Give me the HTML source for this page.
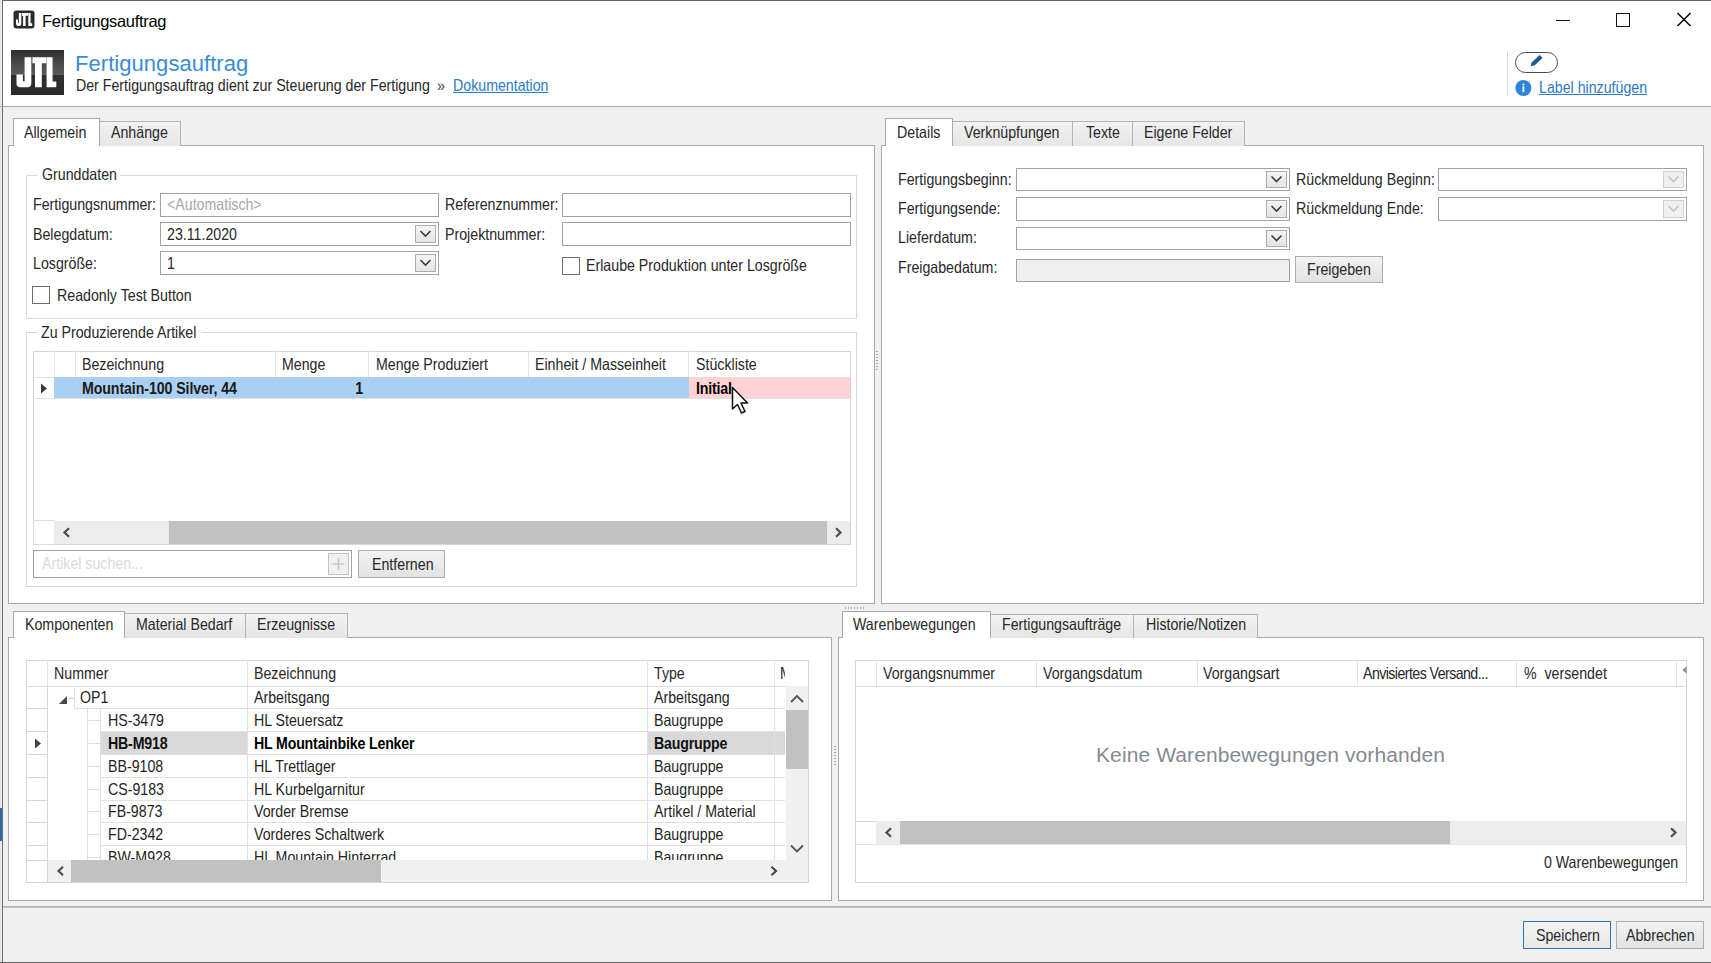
<!DOCTYPE html>
<html><head><meta charset="utf-8"><title>Fertigungsauftrag</title>
<style>
html,body{margin:0;padding:0}
body{width:1711px;height:963px;overflow:hidden;background:#f0f0f0;font-family:"Liberation Sans",sans-serif;font-size:15px;color:#1f1f1f;position:relative}
.a{position:absolute;box-sizing:border-box}
.t{position:absolute;white-space:nowrap;line-height:1}
</style></head><body>

<div class="a" style="left:0px;top:0px;width:1711px;height:107px;background:#ffffff"></div>
<div class="a" style="left:0px;top:0px;width:1711px;height:1px;background:#666666"></div>
<div class="a" style="left:1.5px;top:0px;width:1.2000000000000002px;height:963px;background:#6e6e6e"></div>
<div class="a" style="left:0px;top:0px;width:2px;height:963px;background:#e8e8e8"></div>
<div class="a" style="left:0px;top:808px;width:2px;height:33px;background:#2a6aa8"></div>
<div class="a" style="left:0px;top:962px;width:1711px;height:1px;background:#666666"></div>
<svg class="a" style="left:13px;top:10px" width="23" height="19" viewBox="0 0 23 19">
<rect x="0.5" y="0.5" width="21" height="18" rx="3" fill="#2a2a2a"/>
<path d="M5.8 3H8.3V13.5Q8.3 16 5.8 16H5.3Q3 16 3 13.5V9.5H5V13.2H5.8Z M8.9 3H15V5.8H12.6V16H10.1V5.8H8.9Z M15.3 3H17.6V13.3H19.2V16H15.3Z" fill="#fff"/>
</svg>
<div class="t" style="left:42px;top:13.03px;font-size:16.5px;color:#000;font-weight:normal;letter-spacing:-0.3px;">Fertigungsauftrag</div>
<div class="a" style="left:1556px;top:19.5px;width:14px;height:1.5px;background:#111"></div>
<div class="a" style="left:1616px;top:13px;width:14px;height:14px;border:1.6px solid #111"></div>
<svg class="a" style="left:1676px;top:12px" width="16" height="16" viewBox="0 0 16 16"><path d="M1.5 1L14.5 14M14.5 1L1.5 14" stroke="#111" stroke-width="1.6"/></svg>
<svg class="a" style="left:11px;top:50px" width="53" height="45" viewBox="0 0 53 45">
<defs><linearGradient id="lg" x1="0" y1="0" x2="0" y2="1">
<stop offset="0" stop-color="#2e2e2e"/><stop offset="0.3" stop-color="#4a4a4a"/><stop offset="0.55" stop-color="#5a5a5a"/><stop offset="0.56" stop-color="#303030"/><stop offset="1" stop-color="#2a2a2a"/></linearGradient></defs>
<rect width="53" height="45" fill="url(#lg)"/>
<path d="M13.6 7.2H20.3V33.5Q20.3 37.3 16.5 37.3H9.3Q5.5 37.3 5.5 33.5V24.4H11.9V31.2H13.6Z" fill="#fff"/>
<path d="M21.4 7.2H35.4V13.3H30.8V37.3H24V13.3H21.4Z" fill="#fff"/>
<path d="M35.6 7.2H41.6V31.5H45.3V37.3H35.6Z" fill="#fff"/>
</svg>
<div class="t" style="left:75px;top:52.68px;font-size:22px;color:#3a8cd4;font-weight:normal;letter-spacing:0.05px;">Fertigungsauftrag</div>
<div class="t" style="left:75.5px;top:76.81px;font-size:17px;color:#282828;font-weight:normal;letter-spacing:0px;transform:scaleX(0.834);transform-origin:left top;">Der Fertigungsauftrag dient zur Steuerung der Fertigung</div>
<div class="t" style="left:437px;top:77.23px;font-size:16.5px;color:#444;font-weight:normal;letter-spacing:0.0px;transform:scaleX(0.86);transform-origin:left top;">»</div>
<div class="t" style="left:452.5px;top:77.23px;font-size:16.5px;color:#2a7cc7;font-weight:normal;letter-spacing:0.0px;transform:scaleX(0.86);transform-origin:left top;text-decoration:underline">Dokumentation</div>
<div class="a" style="left:1507px;top:52px;width:1px;height:44px;background:#d8d8d8"></div>
<div class="a" style="left:1515px;top:51.5px;width:43px;height:21.0px;border:1.6px solid #4a4a4a;border-radius:11px;background:#fff"></div>
<svg class="a" style="left:1526px;top:52px" width="20" height="18" viewBox="0 0 20 18"><path d="M4.6 14.2L5.6 10.4L13.6 3L16.6 6L8.7 13.3Z" fill="#1d5a8e"/></svg>
<svg class="a" style="left:1515px;top:80px" width="17" height="17" viewBox="0 0 17 17"><circle cx="8.4" cy="8" r="8" fill="#2b86d6"/><rect x="7.5" y="3.6" width="1.8" height="1.8" fill="#fff"/><rect x="7.5" y="6.3" width="1.8" height="5.8" fill="#fff"/></svg>
<div class="t" style="left:1538.8px;top:78.63px;font-size:16.5px;color:#2f7abf;font-weight:normal;letter-spacing:0px;transform:scaleX(0.86);transform-origin:left top;text-decoration:underline">Label hinzufügen</div>
<div class="a" style="left:0px;top:106px;width:1711px;height:1px;background:#a8a8a8"></div>
<div class="a" style="left:8px;top:145px;width:867px;height:459px;background:#fff;border:1px solid #a9a9a9"></div>
<div class="a" style="left:99px;top:121px;width:82px;height:25px;background:linear-gradient(#f2f2f2,#e6e6e6);border:1px solid #b4b4b4;border-bottom:none"></div>
<div class="t" style="left:111px;top:124.03px;font-size:16.5px;color:#282828;font-weight:normal;letter-spacing:0px;transform:scaleX(0.86);transform-origin:left top;">Anhänge</div>
<div class="a" style="left:13px;top:118px;width:87px;height:28px;background:#fff;border:1px solid #a9a9a9;border-bottom:none"></div>
<div class="t" style="left:24px;top:124.03px;font-size:16.5px;color:#282828;font-weight:normal;letter-spacing:0px;transform:scaleX(0.86);transform-origin:left top;">Allgemein</div>
<div class="a" style="left:14px;top:145px;width:85px;height:2px;background:#fff"></div>
<div class="a" style="left:26px;top:175px;width:831px;height:144px;border:1px solid #d8d8d8"></div>
<div class="a" style="left:38px;top:173px;width:82px;height:5px;background:#fff"></div>
<div class="t" style="left:42px;top:166.43px;font-size:16.5px;color:#282828;font-weight:normal;letter-spacing:0px;transform:scaleX(0.86);transform-origin:left top;">Grunddaten</div>
<div class="t" style="left:33px;top:196.03px;font-size:16.5px;color:#282828;font-weight:normal;letter-spacing:0px;transform:scaleX(0.86);transform-origin:left top;">Fertigungsnummer:</div>
<div class="a" style="left:160px;top:193px;width:279px;height:24px;background:#fff;border:1px solid #a2a2a2"></div>
<div class="t" style="left:167px;top:196.03px;font-size:16.5px;color:#a8a8a8;font-weight:normal;letter-spacing:0px;transform:scaleX(0.86);transform-origin:left top;">&lt;Automatisch&gt;</div>
<div class="t" style="left:445px;top:196.23px;font-size:16.5px;color:#282828;font-weight:normal;letter-spacing:0px;transform:scaleX(0.86);transform-origin:left top;">Referenznummer:</div>
<div class="a" style="left:562px;top:193px;width:289px;height:24px;background:#fff;border:1px solid #a2a2a2"></div>
<div class="t" style="left:33px;top:225.63px;font-size:16.5px;color:#282828;font-weight:normal;letter-spacing:0px;transform:scaleX(0.86);transform-origin:left top;">Belegdatum:</div>
<div class="a" style="left:160px;top:222px;width:279px;height:24px;background:#fff;border:1px solid #a2a2a2"></div>
<div class="a" style="left:415px;top:225px;width:21px;height:18px;background:linear-gradient(#f4f4f4,#e4e4e4);border:1px solid #acacac"></div>
<svg class="a" style="left:415px;top:225px" width="21" height="18" viewBox="0 0 21 18"><path d="M5.5 6.0l5 5 5-5" fill="none" stroke="#3c3c3c" stroke-width="1.6"/></svg>
<div class="t" style="left:167px;top:225.63px;font-size:16.5px;color:#282828;font-weight:normal;letter-spacing:0px;transform:scaleX(0.86);transform-origin:left top;">23.11.2020</div>
<div class="t" style="left:445px;top:225.63px;font-size:16.5px;color:#282828;font-weight:normal;letter-spacing:0px;transform:scaleX(0.86);transform-origin:left top;">Projektnummer:</div>
<div class="a" style="left:562px;top:222px;width:289px;height:24px;background:#fff;border:1px solid #a2a2a2"></div>
<div class="t" style="left:33px;top:255.03px;font-size:16.5px;color:#282828;font-weight:normal;letter-spacing:0px;transform:scaleX(0.86);transform-origin:left top;">Losgröße:</div>
<div class="a" style="left:160px;top:251px;width:279px;height:24px;background:#fff;border:1px solid #a2a2a2"></div>
<div class="a" style="left:415px;top:254px;width:21px;height:18px;background:linear-gradient(#f4f4f4,#e4e4e4);border:1px solid #acacac"></div>
<svg class="a" style="left:415px;top:254px" width="21" height="18" viewBox="0 0 21 18"><path d="M5.5 6.0l5 5 5-5" fill="none" stroke="#3c3c3c" stroke-width="1.6"/></svg>
<div class="t" style="left:167px;top:255.03px;font-size:16.5px;color:#282828;font-weight:normal;letter-spacing:0px;transform:scaleX(0.86);transform-origin:left top;">1</div>
<div class="a" style="left:562px;top:257px;width:18px;height:18px;background:#fff;border:1px solid #6e6e6e"></div>
<div class="t" style="left:586px;top:257.23px;font-size:16.5px;color:#282828;font-weight:normal;letter-spacing:0px;transform:scaleX(0.86);transform-origin:left top;">Erlaube Produktion unter Losgröße</div>
<div class="a" style="left:32px;top:286px;width:18px;height:18px;background:#fff;border:1px solid #6e6e6e"></div>
<div class="t" style="left:56.5px;top:287.23px;font-size:16.5px;color:#282828;font-weight:normal;letter-spacing:0px;transform:scaleX(0.86);transform-origin:left top;">Readonly Test Button</div>
<div class="a" style="left:26px;top:332px;width:831px;height:255px;border:1px solid #d8d8d8"></div>
<div class="a" style="left:37.3px;top:330px;width:165.0px;height:5px;background:#fff"></div>
<div class="t" style="left:41.3px;top:323.73px;font-size:16.5px;color:#282828;font-weight:normal;letter-spacing:0px;transform:scaleX(0.86);transform-origin:left top;">Zu Produzierende Artikel</div>
<div class="a" style="left:33px;top:351px;width:818px;height:194px;background:#fff;border:1px solid #d6d6d6"></div>
<div class="a" style="left:33px;top:377px;width:818px;height:1px;background:#e2e2e2"></div>
<div class="a" style="left:54px;top:351px;width:1px;height:26px;background:#e4e4e4"></div>
<div class="a" style="left:75px;top:351px;width:1px;height:26px;background:#e4e4e4"></div>
<div class="a" style="left:275px;top:351px;width:1px;height:26px;background:#e4e4e4"></div>
<div class="a" style="left:368px;top:351px;width:1px;height:26px;background:#e4e4e4"></div>
<div class="a" style="left:528px;top:351px;width:1px;height:26px;background:#e4e4e4"></div>
<div class="a" style="left:688px;top:351px;width:1px;height:26px;background:#e4e4e4"></div>
<div class="a" style="left:54px;top:377px;width:1px;height:22px;background:#e4e4e4"></div>
<div class="a" style="left:54px;top:377px;width:635px;height:22px;background:#a9cff2"></div>
<div class="a" style="left:689px;top:377px;width:161px;height:22px;background:#ffd3d6"></div>
<div class="a" style="left:33px;top:398px;width:818px;height:1px;background:#e0e0e0"></div>
<svg class="a" style="left:40px;top:383px" width="8" height="11" viewBox="0 0 8 11"><path d="M1 0.5L7 5.5L1 10.5z" fill="#3c3c3c"/></svg>
<div class="t" style="left:82px;top:356.03px;font-size:16.5px;color:#282828;font-weight:normal;letter-spacing:0px;transform:scaleX(0.86);transform-origin:left top;">Bezeichnung</div>
<div class="t" style="left:282px;top:356.03px;font-size:16.5px;color:#282828;font-weight:normal;letter-spacing:0px;transform:scaleX(0.86);transform-origin:left top;">Menge</div>
<div class="t" style="left:375.5px;top:356.03px;font-size:16.5px;color:#282828;font-weight:normal;letter-spacing:0px;transform:scaleX(0.86);transform-origin:left top;">Menge Produziert</div>
<div class="t" style="left:535px;top:356.03px;font-size:16.5px;color:#282828;font-weight:normal;letter-spacing:0px;transform:scaleX(0.86);transform-origin:left top;">Einheit / Masseinheit</div>
<div class="t" style="left:695.5px;top:356.03px;font-size:16.5px;color:#282828;font-weight:normal;letter-spacing:0px;transform:scaleX(0.86);transform-origin:left top;">Stückliste</div>
<div class="t" style="left:82px;top:379.63px;font-size:16.5px;color:#1a1a1a;font-weight:bold;letter-spacing:-0.11000000000000001px;transform:scaleX(0.86);transform-origin:left top;">Mountain-100 Silver, 44</div>
<div class="t" style="right:1348px;top:379.63px;font-size:16.5px;color:#111;font-weight:bold;letter-spacing:0px;transform:scaleX(0.86);transform-origin:right top;">1</div>
<div class="t" style="left:695.5px;top:379.63px;font-size:16.5px;color:#000;font-weight:bold;letter-spacing:-0.22000000000000003px;transform:scaleX(0.86);transform-origin:left top;">Initial</div>
<div class="a" style="left:33px;top:520px;width:22px;height:25px;background:#fff;border:1px solid #dcdcdc"></div>
<div class="a" style="left:54px;top:521px;width:796px;height:23px;background:#ececec"></div>
<div class="a" style="left:169px;top:521px;width:658px;height:23px;background:#c1c1c1"></div>
<svg class="a" style="left:0;top:0;overflow:visible" width="1" height="1"><path d="M69 528.2L64.5 532.5L69 536.8" fill="none" stroke="#4a4a4a" stroke-width="2.2"/></svg>
<svg class="a" style="left:0;top:0;overflow:visible" width="1" height="1"><path d="M836 528.2L840.5 532.5L836 536.8" fill="none" stroke="#4a4a4a" stroke-width="2.2"/></svg>
<div class="a" style="left:33px;top:550px;width:319px;height:28px;background:#fff;border:1px solid #a2a2a2"></div>
<div class="t" style="left:42px;top:555.03px;font-size:16.5px;color:#dadada;font-weight:normal;letter-spacing:0px;transform:scaleX(0.86);transform-origin:left top;">Artikel suchen...</div>
<div class="a" style="left:328px;top:553px;width:21px;height:22px;background:#f0f0f0;border:1px solid #c4c4c4"></div>
<svg class="a" style="left:328px;top:553px" width="21" height="22" viewBox="0 0 21 22"><path d="M10.5 5v12M4.5 11h12" stroke="#c8c8c8" stroke-width="1.5"/></svg>
<div class="a" style="left:358px;top:550px;width:87px;height:28px;background:linear-gradient(#f2f2f2,#e3e3e3);border:1px solid #adadad"></div>
<div class="t" style="left:371.5px;top:555.93px;font-size:16.5px;color:#282828;font-weight:normal;letter-spacing:0px;transform:scaleX(0.86);transform-origin:left top;">Entfernen</div>
<div class="a" style="left:881px;top:145px;width:823px;height:459px;background:#fff;border:1px solid #a9a9a9"></div>
<div class="a" style="left:1132px;top:121px;width:113px;height:25px;background:linear-gradient(#f2f2f2,#e6e6e6);border:1px solid #b4b4b4;border-bottom:none"></div>
<div class="t" style="left:1144.4px;top:124.03px;font-size:16.5px;color:#282828;font-weight:normal;letter-spacing:0px;transform:scaleX(0.86);transform-origin:left top;">Eigene Felder</div>
<div class="a" style="left:1072px;top:121px;width:61px;height:25px;background:linear-gradient(#f2f2f2,#e6e6e6);border:1px solid #b4b4b4;border-bottom:none"></div>
<div class="t" style="left:1085.6px;top:124.03px;font-size:16.5px;color:#282828;font-weight:normal;letter-spacing:0px;transform:scaleX(0.86);transform-origin:left top;">Texte</div>
<div class="a" style="left:952px;top:121px;width:121px;height:25px;background:linear-gradient(#f2f2f2,#e6e6e6);border:1px solid #b4b4b4;border-bottom:none"></div>
<div class="t" style="left:964.2px;top:124.03px;font-size:16.5px;color:#282828;font-weight:normal;letter-spacing:0px;transform:scaleX(0.86);transform-origin:left top;">Verknüpfungen</div>
<div class="a" style="left:885px;top:118px;width:68px;height:28px;background:#fff;border:1px solid #a9a9a9;border-bottom:none"></div>
<div class="t" style="left:897px;top:124.03px;font-size:16.5px;color:#282828;font-weight:normal;letter-spacing:0px;transform:scaleX(0.86);transform-origin:left top;">Details</div>
<div class="a" style="left:886px;top:145px;width:66px;height:2px;background:#fff"></div>
<div class="t" style="left:898px;top:171.03px;font-size:16.5px;color:#282828;font-weight:normal;letter-spacing:0px;transform:scaleX(0.86);transform-origin:left top;">Fertigungsbeginn:</div>
<div class="a" style="left:1016px;top:168px;width:274px;height:23px;background:#fff;border:1px solid #a2a2a2"></div>
<div class="a" style="left:1266px;top:171px;width:21px;height:17px;background:linear-gradient(#f4f4f4,#e4e4e4);border:1px solid #acacac"></div>
<svg class="a" style="left:1266px;top:171px" width="21" height="17" viewBox="0 0 21 17"><path d="M5.5 5.5l5 5 5-5" fill="none" stroke="#3c3c3c" stroke-width="1.6"/></svg>
<div class="t" style="left:898px;top:200.33px;font-size:16.5px;color:#282828;font-weight:normal;letter-spacing:0px;transform:scaleX(0.86);transform-origin:left top;">Fertigungsende:</div>
<div class="a" style="left:1016px;top:197px;width:274px;height:24px;background:#fff;border:1px solid #a2a2a2"></div>
<div class="a" style="left:1266px;top:200px;width:21px;height:18px;background:linear-gradient(#f4f4f4,#e4e4e4);border:1px solid #acacac"></div>
<svg class="a" style="left:1266px;top:200px" width="21" height="18" viewBox="0 0 21 18"><path d="M5.5 6.0l5 5 5-5" fill="none" stroke="#3c3c3c" stroke-width="1.6"/></svg>
<div class="t" style="left:898px;top:229.33px;font-size:16.5px;color:#282828;font-weight:normal;letter-spacing:0px;transform:scaleX(0.86);transform-origin:left top;">Lieferdatum:</div>
<div class="a" style="left:1016px;top:227px;width:274px;height:23px;background:#fff;border:1px solid #a2a2a2"></div>
<div class="a" style="left:1266px;top:230px;width:21px;height:17px;background:linear-gradient(#f4f4f4,#e4e4e4);border:1px solid #acacac"></div>
<svg class="a" style="left:1266px;top:230px" width="21" height="17" viewBox="0 0 21 17"><path d="M5.5 5.5l5 5 5-5" fill="none" stroke="#3c3c3c" stroke-width="1.6"/></svg>
<div class="t" style="left:898px;top:259.43px;font-size:16.5px;color:#282828;font-weight:normal;letter-spacing:0px;transform:scaleX(0.86);transform-origin:left top;">Freigabedatum:</div>
<div class="a" style="left:1016px;top:259px;width:274px;height:23px;background:#efefef;border:1px solid #a2a2a2"></div>
<div class="a" style="left:1295px;top:256px;width:88px;height:27px;background:linear-gradient(#f2f2f2,#e3e3e3);border:1px solid #adadad"></div>
<div class="t" style="left:1307px;top:261.23px;font-size:16.5px;color:#282828;font-weight:normal;letter-spacing:0px;transform:scaleX(0.86);transform-origin:left top;">Freigeben</div>
<div class="t" style="left:1295.5px;top:171.03px;font-size:16.5px;color:#282828;font-weight:normal;letter-spacing:0px;transform:scaleX(0.86);transform-origin:left top;">Rückmeldung Beginn:</div>
<div class="a" style="left:1438px;top:168px;width:249px;height:23px;background:#fff;border:1px solid #a2a2a2"></div>
<div class="a" style="left:1663px;top:171px;width:21px;height:17px;background:#f0f0f0;border:1px solid #d0d0d0"></div>
<svg class="a" style="left:1663px;top:171px" width="21" height="17" viewBox="0 0 21 17"><path d="M5.5 5.5l5 5 5-5" fill="none" stroke="#c4c4c4" stroke-width="1.6"/></svg>
<div class="t" style="left:1295.5px;top:200.33px;font-size:16.5px;color:#282828;font-weight:normal;letter-spacing:0px;transform:scaleX(0.86);transform-origin:left top;">Rückmeldung Ende:</div>
<div class="a" style="left:1438px;top:197px;width:249px;height:24px;background:#fff;border:1px solid #a2a2a2"></div>
<div class="a" style="left:1663px;top:200px;width:21px;height:18px;background:#f0f0f0;border:1px solid #d0d0d0"></div>
<svg class="a" style="left:1663px;top:200px" width="21" height="18" viewBox="0 0 21 18"><path d="M5.5 6.0l5 5 5-5" fill="none" stroke="#c4c4c4" stroke-width="1.6"/></svg>
<div class="a" style="left:876px;top:351px;width:2px;height:21px;background:repeating-linear-gradient(#a8a8a8 0 1px,transparent 1px 3px)"></div>
<div class="a" style="left:845px;top:607px;width:21px;height:2px;background:repeating-linear-gradient(90deg,#a8a8a8 0 1px,transparent 1px 3px)"></div>
<div class="a" style="left:834px;top:746px;width:2px;height:20px;background:repeating-linear-gradient(#a8a8a8 0 1px,transparent 1px 3px)"></div>
<div class="a" style="left:8px;top:637px;width:824px;height:264px;background:#fff;border:1px solid #a9a9a9"></div>
<div class="a" style="left:245px;top:613px;width:103px;height:25px;background:linear-gradient(#f2f2f2,#e6e6e6);border:1px solid #b4b4b4;border-bottom:none"></div>
<div class="t" style="left:256.6px;top:615.93px;font-size:16.5px;color:#282828;font-weight:normal;letter-spacing:0px;transform:scaleX(0.86);transform-origin:left top;">Erzeugnisse</div>
<div class="a" style="left:124px;top:613px;width:122px;height:25px;background:linear-gradient(#f2f2f2,#e6e6e6);border:1px solid #b4b4b4;border-bottom:none"></div>
<div class="t" style="left:136.3px;top:615.93px;font-size:16.5px;color:#282828;font-weight:normal;letter-spacing:0px;transform:scaleX(0.86);transform-origin:left top;">Material Bedarf</div>
<div class="a" style="left:13px;top:611px;width:112px;height:27px;background:#fff;border:1px solid #a9a9a9;border-bottom:none"></div>
<div class="t" style="left:24.9px;top:615.93px;font-size:16.5px;color:#282828;font-weight:normal;letter-spacing:0px;transform:scaleX(0.86);transform-origin:left top;">Komponenten</div>
<div class="a" style="left:14px;top:637px;width:110px;height:2px;background:#fff"></div>
<div class="a" style="left:26px;top:660px;width:783px;height:223px;background:#fff;border:1px solid #d6d6d6"></div>
<div class="a" style="left:26px;top:686px;width:783px;height:1px;background:#dcdcdc"></div>
<div class="a" style="left:47px;top:660px;width:1px;height:26px;background:#e4e4e4"></div>
<div class="a" style="left:247px;top:660px;width:1px;height:26px;background:#e4e4e4"></div>
<div class="a" style="left:647px;top:660px;width:1px;height:26px;background:#e4e4e4"></div>
<div class="a" style="left:774px;top:660px;width:1px;height:26px;background:#e4e4e4"></div>
<div class="t" style="left:54.3px;top:665.23px;font-size:16.5px;color:#282828;font-weight:normal;letter-spacing:0px;transform:scaleX(0.86);transform-origin:left top;">Nummer</div>
<div class="t" style="left:254px;top:665.23px;font-size:16.5px;color:#282828;font-weight:normal;letter-spacing:0px;transform:scaleX(0.86);transform-origin:left top;">Bezeichnung</div>
<div class="t" style="left:653.5px;top:665.23px;font-size:16.5px;color:#282828;font-weight:normal;letter-spacing:0px;transform:scaleX(0.86);transform-origin:left top;">Type</div>
<div class="a" style="left:780px;top:665px;width:6px;height:20px;overflow:hidden"><div class="t" style="left:0;top:666.5px;font-size:15px"></div></div>
<div class="t" style="left:780px;top:665.23px;font-size:16.5px;color:#282828;font-weight:normal;letter-spacing:0px;transform:scaleX(0.86);transform-origin:left top;clip-path:inset(0 0 0 0);width:6px;overflow:hidden">M</div>
<div class="a" style="left:27px;top:686px;width:758px;height:174px;overflow:hidden">
<div class="a" style="left:73px;top:45.5px;width:147px;height:23.0px;background:#d9d9d9"></div>
<div class="a" style="left:621px;top:45.5px;width:138px;height:23.0px;background:#d9d9d9"></div>
<div class="a" style="left:-1px;top:22px;width:21px;height:1px;background:#d6d6d6"></div>
<div class="a" style="left:47px;top:22px;width:712px;height:1px;background:#e0e0e0"></div>
<div class="t" style="left:53px;top:3.03px;font-size:16.5px;color:#1f1f1f;font-weight:normal;letter-spacing:0px;transform:scaleX(0.86);transform-origin:left top">OP1</div>
<div class="t" style="left:227px;top:3.03px;font-size:16.5px;color:#1f1f1f;font-weight:normal;letter-spacing:0px;transform:scaleX(0.86);transform-origin:left top">Arbeitsgang</div>
<div class="t" style="left:626.5px;top:3.03px;font-size:16.5px;color:#1f1f1f;font-weight:normal;letter-spacing:0px;transform:scaleX(0.86);transform-origin:left top">Arbeitsgang</div>
<div class="a" style="left:-1px;top:45px;width:21px;height:1px;background:#d6d6d6"></div>
<div class="a" style="left:73px;top:45px;width:686px;height:1px;background:#e0e0e0"></div>
<div class="t" style="left:80.5px;top:26.03px;font-size:16.5px;color:#1f1f1f;font-weight:normal;letter-spacing:0px;transform:scaleX(0.86);transform-origin:left top">HS-3479</div>
<div class="t" style="left:227px;top:26.03px;font-size:16.5px;color:#1f1f1f;font-weight:normal;letter-spacing:0px;transform:scaleX(0.86);transform-origin:left top">HL Steuersatz</div>
<div class="t" style="left:626.5px;top:26.03px;font-size:16.5px;color:#1f1f1f;font-weight:normal;letter-spacing:0px;transform:scaleX(0.86);transform-origin:left top">Baugruppe</div>
<div class="a" style="left:-1px;top:67.5px;width:21px;height:1.0px;background:#d6d6d6"></div>
<div class="a" style="left:73px;top:67.5px;width:686px;height:1.0px;background:#e0e0e0"></div>
<div class="t" style="left:80.5px;top:48.53px;font-size:16.5px;color:#111;font-weight:bold;letter-spacing:-0.22000000000000003px;transform:scaleX(0.86);transform-origin:left top">HB-M918</div>
<div class="t" style="left:227px;top:48.53px;font-size:16.5px;color:#000;font-weight:bold;letter-spacing:-0.22000000000000003px;transform:scaleX(0.86);transform-origin:left top">HL Mountainbike Lenker</div>
<div class="t" style="left:626.5px;top:48.53px;font-size:16.5px;color:#111;font-weight:bold;letter-spacing:-0.22000000000000003px;transform:scaleX(0.86);transform-origin:left top">Baugruppe</div>
<div class="a" style="left:-1px;top:90.5px;width:21px;height:1.0px;background:#d6d6d6"></div>
<div class="a" style="left:73px;top:90.5px;width:686px;height:1.0px;background:#e0e0e0"></div>
<div class="t" style="left:80.5px;top:71.53px;font-size:16.5px;color:#1f1f1f;font-weight:normal;letter-spacing:0px;transform:scaleX(0.86);transform-origin:left top">BB-9108</div>
<div class="t" style="left:227px;top:71.53px;font-size:16.5px;color:#1f1f1f;font-weight:normal;letter-spacing:0px;transform:scaleX(0.86);transform-origin:left top">HL Trettlager</div>
<div class="t" style="left:626.5px;top:71.53px;font-size:16.5px;color:#1f1f1f;font-weight:normal;letter-spacing:0px;transform:scaleX(0.86);transform-origin:left top">Baugruppe</div>
<div class="a" style="left:-1px;top:113.5px;width:21px;height:1.0px;background:#d6d6d6"></div>
<div class="a" style="left:73px;top:113.5px;width:686px;height:1.0px;background:#e0e0e0"></div>
<div class="t" style="left:80.5px;top:94.53px;font-size:16.5px;color:#1f1f1f;font-weight:normal;letter-spacing:0px;transform:scaleX(0.86);transform-origin:left top">CS-9183</div>
<div class="t" style="left:227px;top:94.53px;font-size:16.5px;color:#1f1f1f;font-weight:normal;letter-spacing:0px;transform:scaleX(0.86);transform-origin:left top">HL Kurbelgarnitur</div>
<div class="t" style="left:626.5px;top:94.53px;font-size:16.5px;color:#1f1f1f;font-weight:normal;letter-spacing:0px;transform:scaleX(0.86);transform-origin:left top">Baugruppe</div>
<div class="a" style="left:-1px;top:136px;width:21px;height:1px;background:#d6d6d6"></div>
<div class="a" style="left:73px;top:136px;width:686px;height:1px;background:#e0e0e0"></div>
<div class="t" style="left:80.5px;top:117.03px;font-size:16.5px;color:#1f1f1f;font-weight:normal;letter-spacing:0px;transform:scaleX(0.86);transform-origin:left top">FB-9873</div>
<div class="t" style="left:227px;top:117.03px;font-size:16.5px;color:#1f1f1f;font-weight:normal;letter-spacing:0px;transform:scaleX(0.86);transform-origin:left top">Vorder Bremse</div>
<div class="t" style="left:626.5px;top:117.03px;font-size:16.5px;color:#1f1f1f;font-weight:normal;letter-spacing:0px;transform:scaleX(0.86);transform-origin:left top">Artikel / Material</div>
<div class="a" style="left:-1px;top:158.5px;width:21px;height:1.0px;background:#d6d6d6"></div>
<div class="a" style="left:73px;top:158.5px;width:686px;height:1.0px;background:#e0e0e0"></div>
<div class="t" style="left:80.5px;top:139.53px;font-size:16.5px;color:#1f1f1f;font-weight:normal;letter-spacing:0px;transform:scaleX(0.86);transform-origin:left top">FD-2342</div>
<div class="t" style="left:227px;top:139.53px;font-size:16.5px;color:#1f1f1f;font-weight:normal;letter-spacing:0px;transform:scaleX(0.86);transform-origin:left top">Vorderes Schaltwerk</div>
<div class="t" style="left:626.5px;top:139.53px;font-size:16.5px;color:#1f1f1f;font-weight:normal;letter-spacing:0px;transform:scaleX(0.86);transform-origin:left top">Baugruppe</div>
<div class="a" style="left:-1px;top:181.5px;width:21px;height:1.0px;background:#d6d6d6"></div>
<div class="a" style="left:73px;top:181.5px;width:686px;height:1.0px;background:#e0e0e0"></div>
<div class="t" style="left:80.5px;top:162.53px;font-size:16.5px;color:#1f1f1f;font-weight:normal;letter-spacing:0px;transform:scaleX(0.86);transform-origin:left top">BW-M928</div>
<div class="t" style="left:227px;top:162.53px;font-size:16.5px;color:#1f1f1f;font-weight:normal;letter-spacing:0px;transform:scaleX(0.86);transform-origin:left top">HL Mountain Hinterrad</div>
<div class="t" style="left:626.5px;top:162.53px;font-size:16.5px;color:#1f1f1f;font-weight:normal;letter-spacing:0px;transform:scaleX(0.86);transform-origin:left top">Baugruppe</div>
<div class="a" style="left:20px;top:0px;width:1px;height:174px;background:#d6d6d6"></div>
<div class="a" style="left:220px;top:0px;width:1px;height:174px;background:#e0e0e0"></div>
<div class="a" style="left:620px;top:0px;width:1px;height:174px;background:#d8e0ea"></div>
<div class="a" style="left:747px;top:0px;width:1px;height:174px;background:#e0e0e0"></div>
<div class="a" style="left:47px;top:0px;width:1px;height:23px;background:#e0e0e0"></div>
<div class="a" style="left:60px;top:23px;width:1px;height:151px;background:#e0e0e0"></div>
<div class="a" style="left:73px;top:23px;width:1px;height:151px;background:#e0e0e0"></div>
<div class="a" style="left:60px;top:34px;width:13px;height:1px;background:#e0e0e0"></div>
<div class="a" style="left:60px;top:56.5px;width:13px;height:1.0px;background:#e0e0e0"></div>
<div class="a" style="left:60px;top:79.5px;width:13px;height:1.0px;background:#e0e0e0"></div>
<div class="a" style="left:60px;top:102.5px;width:13px;height:1.0px;background:#e0e0e0"></div>
<div class="a" style="left:60px;top:125px;width:13px;height:1px;background:#e0e0e0"></div>
<div class="a" style="left:60px;top:147.5px;width:13px;height:1.0px;background:#e0e0e0"></div>
<div class="a" style="left:60px;top:170.5px;width:13px;height:1.0px;background:#e0e0e0"></div>
<div class="a" style="left:32px;top:6px;width:10px;height:13px;"></div>
<svg class="a" style="left:31px;top:9px" width="10" height="10" viewBox="0 0 10 10"><path d="M9 1V9H1z" fill="#4a4a4a"/></svg>
<div class="a" style="left:41px;top:12px;width:6px;height:1px;background:#d0d0d0"></div>
</div>
<svg class="a" style="left:34px;top:738px" width="8" height="11" viewBox="0 0 8 11"><path d="M1 0.5L7 5.5L1 10.5z" fill="#444"/></svg>
<div class="a" style="left:786px;top:686px;width:22px;height:174px;background:#f0f0f0"></div>
<div class="a" style="left:786px;top:710px;width:22px;height:59px;background:#c1c1c1"></div>
<svg class="a" style="left:0;top:0;overflow:visible" width="1" height="1"><path d="M791 702L797 696L803 702" fill="none" stroke="#555" stroke-width="1.8"/></svg>
<svg class="a" style="left:0;top:0;overflow:visible" width="1" height="1"><path d="M791 845.5L797 851.5L803 845.5" fill="none" stroke="#555" stroke-width="1.8"/></svg>
<div class="a" style="left:27px;top:860px;width:20px;height:22px;background:#fff"></div>
<div class="a" style="left:27px;top:860px;width:20px;height:1px;background:#d6d6d6"></div>
<div class="a" style="left:47px;top:860px;width:1px;height:22px;background:#d6d6d6"></div>
<div class="a" style="left:48px;top:860px;width:738px;height:22px;background:#f0f0f0"></div>
<div class="a" style="left:71px;top:860px;width:310px;height:22px;background:#c1c1c1"></div>
<div class="a" style="left:786px;top:860px;width:22px;height:22px;background:#f0f0f0"></div>
<svg class="a" style="left:0;top:0;overflow:visible" width="1" height="1"><path d="M63 866.7L58.5 871L63 875.3" fill="none" stroke="#4a4a4a" stroke-width="2.2"/></svg>
<svg class="a" style="left:0;top:0;overflow:visible" width="1" height="1"><path d="M771.5 866.7L776.0 871L771.5 875.3" fill="none" stroke="#4a4a4a" stroke-width="2.2"/></svg>
<div class="a" style="left:838px;top:637px;width:866px;height:264px;background:#fff;border:1px solid #a9a9a9"></div>
<div class="a" style="left:1133px;top:614px;width:125px;height:24px;background:linear-gradient(#f2f2f2,#e6e6e6);border:1px solid #b4b4b4;border-bottom:none"></div>
<div class="t" style="left:1145.7px;top:615.93px;font-size:16.5px;color:#282828;font-weight:normal;letter-spacing:0px;transform:scaleX(0.86);transform-origin:left top;">Historie/Notizen</div>
<div class="a" style="left:990px;top:614px;width:144px;height:24px;background:linear-gradient(#f2f2f2,#e6e6e6);border:1px solid #b4b4b4;border-bottom:none"></div>
<div class="t" style="left:1001.8px;top:615.93px;font-size:16.5px;color:#282828;font-weight:normal;letter-spacing:0px;transform:scaleX(0.86);transform-origin:left top;">Fertigungsaufträge</div>
<div class="a" style="left:842px;top:611px;width:149px;height:27px;background:#fff;border:1px solid #a9a9a9;border-bottom:none"></div>
<div class="t" style="left:853.3px;top:615.93px;font-size:16.5px;color:#282828;font-weight:normal;letter-spacing:0px;transform:scaleX(0.86);transform-origin:left top;">Warenbewegungen</div>
<div class="a" style="left:843px;top:637px;width:147px;height:2px;background:#fff"></div>
<div class="a" style="left:855px;top:660px;width:832px;height:223px;background:#fff;border:1px solid #d6d6d6"></div>
<div class="a" style="left:855px;top:686px;width:832px;height:1px;background:#dcdcdc"></div>
<div class="a" style="left:876px;top:660px;width:1px;height:26px;background:#e4e4e4"></div>
<div class="a" style="left:1036px;top:660px;width:1px;height:26px;background:#e4e4e4"></div>
<div class="a" style="left:1197px;top:660px;width:1px;height:26px;background:#e4e4e4"></div>
<div class="a" style="left:1357px;top:660px;width:1px;height:26px;background:#e4e4e4"></div>
<div class="a" style="left:1516px;top:660px;width:1px;height:26px;background:#e4e4e4"></div>
<div class="a" style="left:1676px;top:660px;width:1px;height:26px;background:#e4e4e4"></div>
<div class="t" style="left:883px;top:665.23px;font-size:16.5px;color:#282828;font-weight:normal;letter-spacing:0px;transform:scaleX(0.86);transform-origin:left top;">Vorgangsnummer</div>
<div class="t" style="left:1042.7px;top:665.23px;font-size:16.5px;color:#282828;font-weight:normal;letter-spacing:0px;transform:scaleX(0.86);transform-origin:left top;">Vorgangsdatum</div>
<div class="t" style="left:1202.5px;top:665.23px;font-size:16.5px;color:#282828;font-weight:normal;letter-spacing:0px;transform:scaleX(0.86);transform-origin:left top;">Vorgangsart</div>
<div class="t" style="left:1363px;top:665.23px;font-size:16.5px;color:#282828;font-weight:normal;letter-spacing:-0.66px;transform:scaleX(0.86);transform-origin:left top;">Anvisiertes Versand...</div>
<div class="t" style="left:1524px;top:665.23px;font-size:16.5px;color:#282828;font-weight:normal;letter-spacing:0px;transform:scaleX(0.86);transform-origin:left top;">%&nbsp; versendet</div>
<svg class="a" style="left:1682px;top:666px" width="5" height="8" viewBox="0 0 5 8"><path d="M4.5 0.5V7.5L0.5 4z" fill="#8a8a8a"/></svg>
<div class="t" style="left:1096px;top:744.02px;font-size:21px;color:#848a92;font-weight:normal;letter-spacing:0.1px;">Keine Warenbewegungen vorhanden</div>
<div class="a" style="left:856px;top:821px;width:20px;height:23px;background:#fff"></div>
<div class="a" style="left:856px;top:821px;width:20px;height:1px;background:#d6d6d6"></div>
<div class="a" style="left:876px;top:821px;width:810px;height:23px;background:#ececec"></div>
<div class="a" style="left:900px;top:821px;width:550px;height:23px;background:#c1c1c1"></div>
<svg class="a" style="left:0;top:0;overflow:visible" width="1" height="1"><path d="M891 828.2L886.5 832.5L891 836.8" fill="none" stroke="#4a4a4a" stroke-width="2.2"/></svg>
<svg class="a" style="left:0;top:0;overflow:visible" width="1" height="1"><path d="M1671 828.2L1675.5 832.5L1671 836.8" fill="none" stroke="#4a4a4a" stroke-width="2.2"/></svg>
<div class="a" style="left:856px;top:844px;width:830px;height:1px;background:#e4e4e4"></div>
<div class="t" style="right:33px;top:853.53px;font-size:16.5px;color:#282828;font-weight:normal;letter-spacing:0px;transform:scaleX(0.86);transform-origin:right top;">0 Warenbewegungen</div>
<div class="a" style="left:3px;top:906px;width:1708px;height:1px;background:#b4b4b4"></div>
<div class="a" style="left:3px;top:907px;width:1708px;height:1px;background:#c4c4c4"></div>
<div class="a" style="left:1523px;top:921px;width:88px;height:28px;background:linear-gradient(#f4f4f4,#e8e8e8);border:1.6px solid #2f74ba"></div>
<div class="t" style="left:1535.5px;top:927.13px;font-size:16.5px;color:#282828;font-weight:normal;letter-spacing:0px;transform:scaleX(0.86);transform-origin:left top;">Speichern</div>
<div class="a" style="left:1616px;top:921px;width:88px;height:28px;background:linear-gradient(#f2f2f2,#e3e3e3);border:1px solid #adadad"></div>
<div class="t" style="left:1625.5px;top:927.13px;font-size:16.5px;color:#282828;font-weight:normal;letter-spacing:0px;transform:scaleX(0.86);transform-origin:left top;">Abbrechen</div>
<svg class="a" style="left:731px;top:386px" width="20" height="30" viewBox="0 0 20 30">
<path d="M1.5 1.5V23L6.5 18.5L10.5 27L14 25.5L10 17H16.5z" fill="#fff" stroke="#111" stroke-width="1.5" stroke-linejoin="round"/></svg>
</body></html>
